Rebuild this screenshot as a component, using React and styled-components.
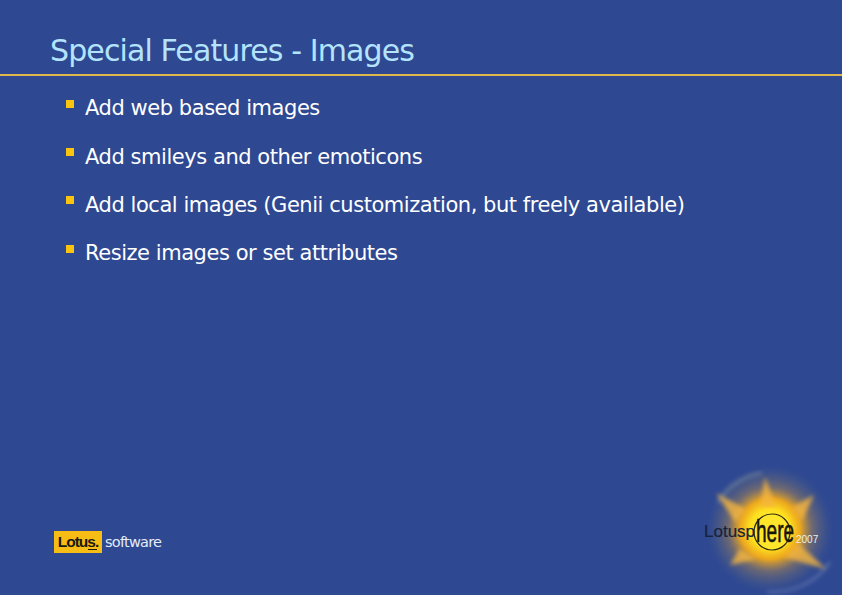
import React from 'react';
import styled, { createGlobalStyle } from 'styled-components';

const GlobalStyle = createGlobalStyle`
  html, body {
    margin: 0;
    padding: 0;
    background: #2e4892;
  }
`;

const Slide = styled.div`
  width: 842px;
  height: 595px;
  display: flex;
  flex-direction: column;
  overflow: hidden;
  background: #2e4892;
  font-family: 'DejaVu Sans', sans-serif;
`;

const Header = styled.header`
  height: 76px;
  padding-left: 50px;
  border-bottom: 2px solid #e0b84e;
  box-sizing: border-box;
  display: flex;
  align-items: flex-end;
`;

const Title = styled.h1`
  margin: 0 0 4px;
  font-size: 30px;
  line-height: 38px;
  font-weight: normal;
  letter-spacing: -0.88px;
  color: #b4e4fd;
`;

const Bullets = styled.ul`
  flex: 1;
  margin: 0;
  padding: 8px 0 0 66px;
  list-style: none;
`;

const Bullet = styled.li`
  display: flex;
  align-items: center;
  gap: 11px;
  height: 48.4px;
  font-size: 21px;
  letter-spacing: -0.45px;
  color: #fff;

  &::before {
    content: '';
    width: 8px;
    height: 8px;
    margin-top: -9px;
    background: #fcc40c;
  }
`;

const Footer = styled.footer`
  height: 130px;
  display: flex;
  justify-content: space-between;
  padding-left: 54px;
`;

const LotusLogo = styled.div`
  display: flex;
  align-items: center;
  gap: 3px;
  height: 22px;
  margin-top: 66px;
`;

const LotusBadge = styled.span`
  position: relative;
  width: 48px;
  height: 22px;
  display: flex;
  align-items: center;
  justify-content: center;
  background: #f8bd14;
  color: #1b1a10;
  font: bold 15.5px 'Liberation Sans', sans-serif;
  letter-spacing: -1px;

  &::after {
    content: '';
    position: absolute;
    left: 34px;
    top: 18px;
    width: 9px;
    height: 1px;
    background: #1b1a10;
  }
`;

const Software = styled.span`
  font: 14.5px 'DejaVu Sans', sans-serif;
  letter-spacing: -0.75px;
  color: #e4ecf6;
`;

const SunLogo = () => (
  <svg width="152" height="130" viewBox="0 0 152 130">
    <defs>
      <radialGradient id="glow">
        <stop offset="0" stopColor="#fff060" />
        <stop offset="0.3" stopColor="#ffe01e" />
        <stop offset="0.46" stopColor="#f5ab18" stopOpacity="0.95" />
        <stop offset="0.64" stopColor="#b08a50" stopOpacity="0.5" />
        <stop offset="0.84" stopColor="#6a6e78" stopOpacity="0.25" />
        <stop offset="1" stopColor="#2e4892" stopOpacity="0" />
      </radialGradient>
      <filter id="soft">
        <feGaussianBlur stdDeviation="2" />
      </filter>
      <filter id="rays">
        <feGaussianBlur stdDeviation="2.2" />
      </filter>
    </defs>
    <path d="M28 38C36 24 50 12 72 8" fill="none" stroke="#93a4ac" strokeWidth="3.5" opacity="0.5" filter="url(#soft)" />
    <path d="M77 127C102 128 126 118 140 97" fill="none" stroke="#93a4c4" strokeWidth="3.5" opacity="0.35" filter="url(#soft)" />
    <circle cx="80" cy="64" r="66" fill="url(#glow)" />
    <g fill="#f6b63e" opacity="0.8" filter="url(#rays)">
      <polygon points="70,42 75,12 86,42" />
      <polygon points="56,44 26,28 46,58" />
      <polygon points="102,42 124,30 112,56" />
      <polygon points="108,78 136,104 94,92" />
      <polygon points="50,84 40,100 66,94" />
    </g>
    <circle cx="82" cy="67" r="18" fill="#ffe62a" stroke="#2a2a10" strokeWidth="1.2" />
    <text x="14" y="72" fontFamily="'Liberation Sans', sans-serif" fontSize="17" fill="#17233a" stroke="#17233a" strokeWidth="0.2">Lotusp</text>
    <text transform="translate(66 77) scale(0.594 1)" fontFamily="'Liberation Sans', sans-serif" fontSize="32" fill="#17150a" stroke="#17150a" strokeWidth="0.6">here</text>
    <text x="106" y="78" fontFamily="'Liberation Sans', sans-serif" fontSize="10" fill="#eef0e0">2007</text>
  </svg>
);

const items = [
  'Add web based images',
  'Add smileys and other emoticons',
  'Add local images (Genii customization, but freely available)',
  'Resize images or set attributes',
];

export default function App() {
  return (
    <Slide>
      <GlobalStyle />
      <Header>
        <Title>Special Features - Images</Title>
      </Header>
      <Bullets>
        {items.map(item => (
          <Bullet key={item}>{item}</Bullet>
        ))}
      </Bullets>
      <Footer>
        <LotusLogo>
          <LotusBadge>Lotus.</LotusBadge>
          <Software>software</Software>
        </LotusLogo>
        <SunLogo />
      </Footer>
    </Slide>
  );
}
